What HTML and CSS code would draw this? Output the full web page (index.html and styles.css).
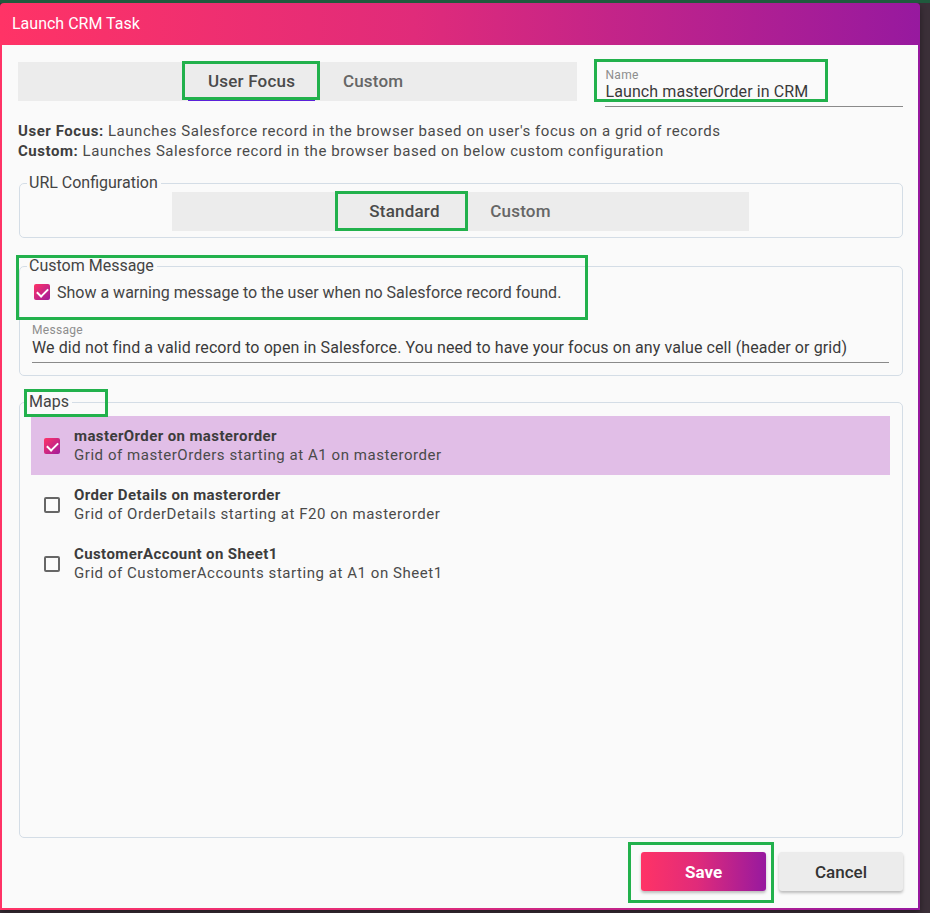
FILE: index.html
```html
<!DOCTYPE html>
<html lang="en">
<head>
  <meta charset="UTF-8" />
  <title>Launch CRM Task</title>
  <link rel="stylesheet" href="styles.css">
</head>
<body>
  <div class="dialog">
    <div class="dialog-header">Launch CRM Task</div>

    <div class="dialog-body">
      <!-- mode tabs + name -->
      <div class="top-row">
        <div class="tabbar top-tabs">
          <div class="tab active">User Focus<span class="mark mark-focus"></span></div>
          <div class="tab">Custom</div>
        </div>
        <div class="field name-field">
          <div class="field-label">Name</div>
          <div class="field-value">Launch masterOrder in CRM</div>
          <span class="mark mark-name"></span>
        </div>
      </div>

      <p class="help">
        <b>User Focus:</b> Launches Salesforce record in the browser based on user's focus on a grid of records<br>
        <b>Custom:</b> Launches Salesforce record in the browser based on below custom configuration
      </p>

      <fieldset class="group url-group">
        <legend>URL Configuration</legend>
        <div class="tabbar url-tabs">
          <div class="tab active">Standard<span class="mark mark-standard"></span></div>
          <div class="tab">Custom</div>
        </div>
      </fieldset>

      <fieldset class="group msg-group">
        <legend>Custom Message</legend>
        <label class="check-line">
          <span class="box checked"></span>
          Show a warning message to the user when no Salesforce record found.
        </label>
        <div class="field msg-field">
          <div class="field-label">Message</div>
          <div class="field-value">We did not find a valid record to open in Salesforce. You need to have your focus on any value cell (header or grid)</div>
        </div>
        <span class="mark mark-msg"></span>
      </fieldset>

      <fieldset class="group maps-group">
        <legend>Maps</legend>
        <div class="map-row selected">
          <span class="box checked"></span>
          <div class="map-text">
            <div class="map-title">masterOrder on masterorder</div>
            <div class="map-sub">Grid of masterOrders starting at A1 on masterorder</div>
          </div>
        </div>
        <div class="map-row">
          <span class="box"></span>
          <div class="map-text">
            <div class="map-title">Order Details on masterorder</div>
            <div class="map-sub">Grid of OrderDetails starting at F20 on masterorder</div>
          </div>
        </div>
        <div class="map-row">
          <span class="box"></span>
          <div class="map-text">
            <div class="map-title">CustomerAccount on Sheet1</div>
            <div class="map-sub">Grid of CustomerAccounts starting at A1 on Sheet1</div>
          </div>
        </div>
        <span class="mark mark-maps"></span>
      </fieldset>

      <div class="actions">
        <button class="btn btn-save">Save<span class="mark mark-save"></span></button>
        <button class="btn btn-cancel">Cancel</button>
      </div>
    </div>
  </div>
</body>
</html>
```

FILE: styles.css
```css
:root {
  --grad: linear-gradient(90deg, #ff3366 0%, #e02b7a 45%, #97199f 100%);
  --text: #444;
  --line: #d4dde6;
  --mark: #22b14c;
}

* { box-sizing: border-box; margin: 0; padding: 0; }

body {
  font-family: Roboto, "Noto Sans", Arial, sans-serif;
  background: #3b2f38;
  border-top: 3px solid #1f5a3d;
  color: var(--text);
  width: 930px;
  height: 913px;
  overflow: hidden;
}

.dialog {
  width: 920px;
  height: 907px;
  background: var(--grad);
  padding: 0 2px 2px 2px;
  border-radius: 4px 4px 0 0;
  box-shadow: 0 3px 6px rgba(0, 0, 0, 0.4);
  display: flex;
  flex-direction: column;
}

.dialog-header {
  height: 42px;
  color: #fff;
  font-size: 16px;
  padding: 11px 0 0 10px;
  flex-shrink: 0;
}

.dialog-body {
  flex: 1;
  background: #fafafa;
  padding: 17px 15px 17px 16px;
  display: flex;
  flex-direction: column;
}

/* annotation boxes */
.mark {
  position: absolute;
  border: 3px solid var(--mark);
  pointer-events: none;
}
.mark-focus { left: -6px; right: -5px; top: -1px; bottom: 1px; }
.mark-name { left: -11px; width: 234px; top: -9px; height: 43px; }
.mark-standard { left: -12px; right: -5px; top: -1px; bottom: 0; }
.mark-msg { left: -4px; width: 572px; top: -20px; height: 65px; }
.mark-maps { left: 4px; width: 84px; top: -22px; height: 28px; }
.mark-save { left: -13px; right: -8px; top: -10px; bottom: -12px; }

/* tabs */
.top-row { display: flex; align-items: flex-start; gap: 28px; }

.tabbar {
  background: #ececec;
  height: 39px;
  display: flex;
}
.top-tabs { width: 560px; padding-left: 170px; }
.url-tabs { width: 577px; margin: 0 auto; justify-content: center; padding-left: 4px; }

.tab {
  position: relative;
  min-width: 116px;
  padding: 0 20px;
  text-align: center;
  line-height: 39px;
  font-size: 17px;
  letter-spacing: 0.2px;
  font-weight: 500;
  color: #666;
}
.tab.active { color: #4a4a4a; }
.top-tabs .tab.active { box-shadow: inset 0 -2px 0 #5b21d9; }

/* text fields */
.field { position: relative; border-bottom: 1px solid #8a8a8a; }
.field-label { font-size: 12px; letter-spacing: 0.3px; color: #8d8d8d; line-height: 14px; }
.field-value { font-size: 16px; letter-spacing: 0.1px; color: #3a3a3a; line-height: 20px; padding-bottom: 4px; }
.name-field { width: 298px; margin-top: 6px; }

.help {
  font-size: 15px;
  letter-spacing: 0.55px;
  line-height: 20px;
  margin: 14px 0 13px;
  color: #4a4a4a;
}
.help b { font-weight: 700; color: #3e3e3e; }

/* fieldsets */
.group {
  position: relative;
  border: 1px solid var(--line);
  border-radius: 5px;
  margin-left: 1px;
  padding: 0 13px 0 12px;
}
.group legend {
  font-size: 16px;
  line-height: 18px;
  color: #444;
  margin-left: -5px;
  padding: 0 3px 0 2px;
}

.url-group { padding-bottom: 6px; }

.msg-group { margin-top: 19px; padding-bottom: 12px; }
.check-line {
  display: flex;
  align-items: center;
  gap: 7px;
  font-size: 16px;
  color: #444;
  padding: 4px 0 0 2px;
  height: 30px;
}
.msg-field { margin-top: 18px; }
.msg-field .field-value { line-height: 22px; padding-bottom: 3px; }

.maps-group { margin-top: 17px; flex: 1; padding: 5px 12px 0 11px; }
.maps-group legend { margin-left: -4px; }

/* checkboxes */
.box {
  width: 16px;
  height: 16px;
  border: 2px solid #666;
  border-radius: 2px;
  flex-shrink: 0;
  position: relative;
}
.box.checked {
  border: none;
  background: linear-gradient(135deg, #ff3366, #a01c9c);
}
.box.checked::after {
  content: "";
  position: absolute;
  left: 5px;
  top: 2px;
  width: 5px;
  height: 9px;
  border: solid #fff;
  border-width: 0 2px 2px 0;
  transform: rotate(45deg);
}

/* maps list */
.map-row {
  display: flex;
  align-items: center;
  gap: 14px;
  height: 59px;
  padding-left: 13px;
}
.map-row.selected { background: #e1bee7; }
.map-title { font-size: 15px; letter-spacing: 0.4px; font-weight: 700; color: #3c3c3c; line-height: 19px; }
.map-sub { font-size: 15px; letter-spacing: 0.55px; color: #4a4a4a; line-height: 19px; }

/* buttons */
.actions {
  display: flex;
  justify-content: flex-end;
  gap: 13px;
  margin-top: 14px;
}
.btn {
  position: relative;
  width: 125px;
  height: 39px;
  border: none;
  border-radius: 3px;
  font-family: inherit;
  font-size: 17px;
  box-shadow: 0 2px 3px rgba(0, 0, 0, 0.25);
}
.btn-save { background: var(--grad); color: #fff; font-weight: 700; }
.btn-cancel { background: #ececec; color: #333; font-weight: 500; width: 124px; }
```
